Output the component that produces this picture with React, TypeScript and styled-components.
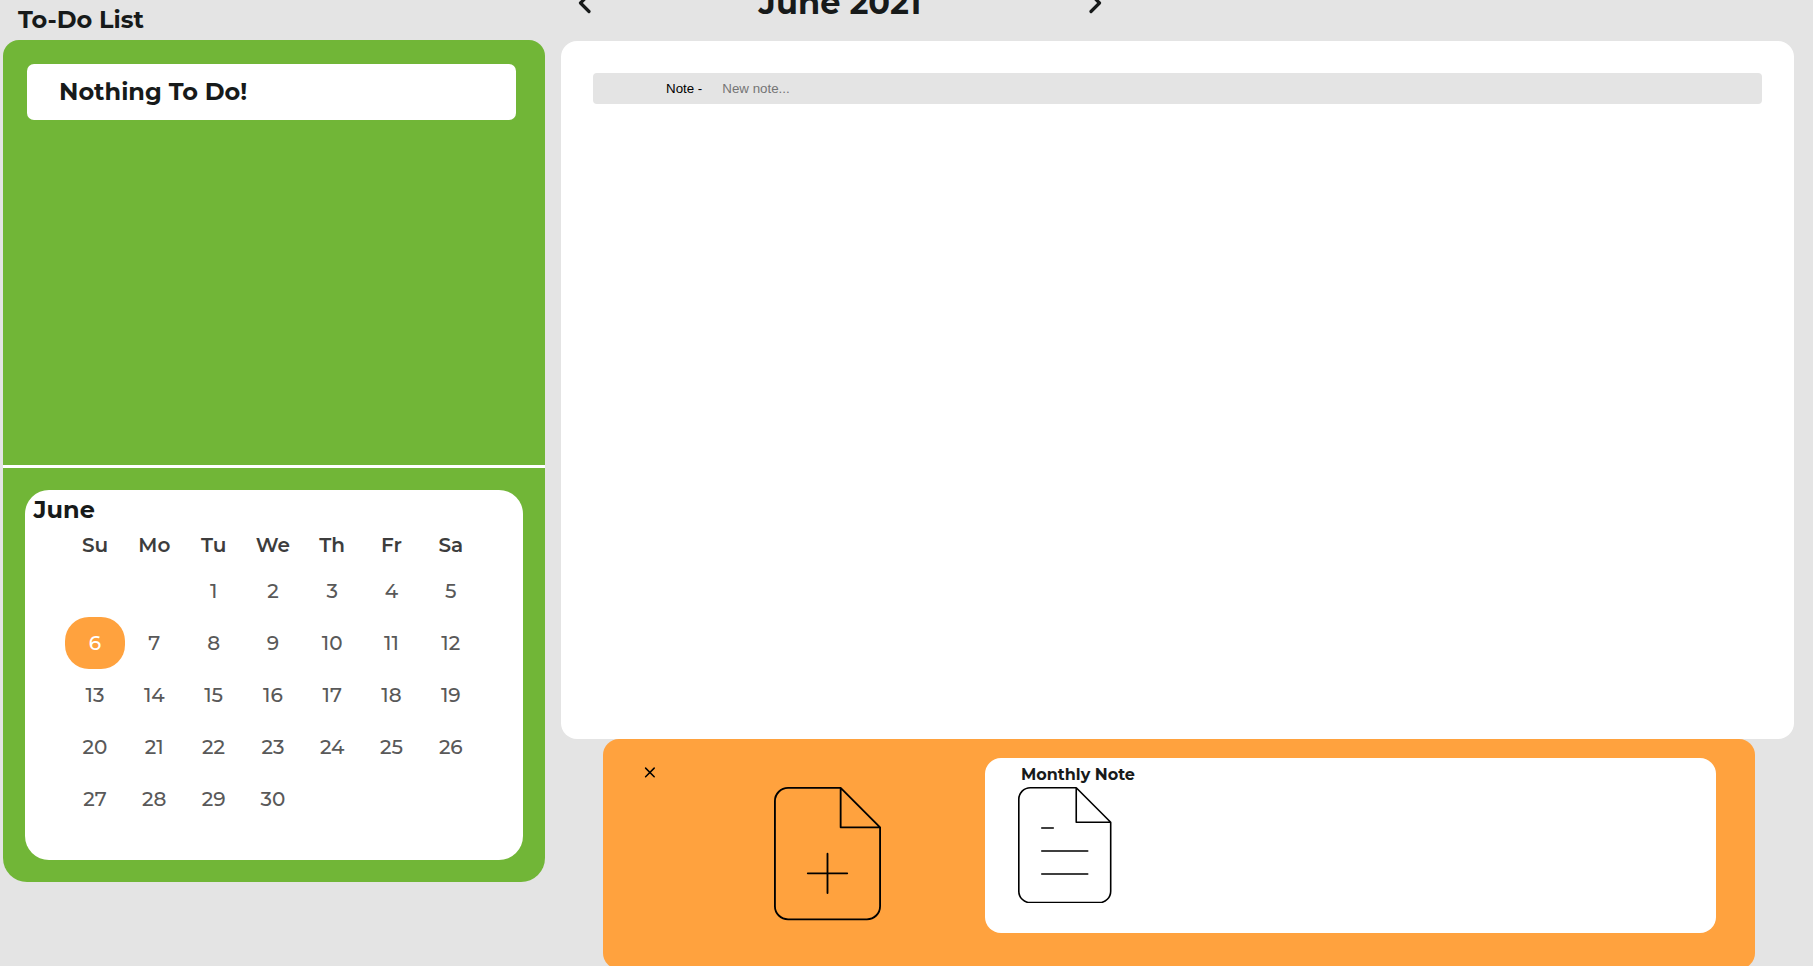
import React from "react";
import styled, { createGlobalStyle } from "styled-components";

const colors = {
  page: "#e4e4e4",
  green: "#71b637",
  orange: "#ffa23e",
  ink: "#171a1a",
};

const GlobalStyle = createGlobalStyle`
  * { box-sizing: border-box; }
  body {
    margin: 0;
    background: ${colors.page};
    font-family: Montserrat, Inter, sans-serif;
    color: ${colors.ink};
    overflow: hidden;
  }
`;

const Page = styled.div`
  display: flex;
  gap: 16px;
  height: 966px;
  padding-left: 3px;
  overflow: hidden;
`;

const Sidebar = styled.aside`
  width: 542px;
  flex: none;
`;

const Heading = styled.h2`
  margin: 0;
  font-size: 24px;
  font-weight: 700;
  white-space: nowrap;
`;

const SidebarHeader = styled.header`
  display: flex;
  align-items: center;
  height: 40px;
  padding: 0 0 2px 15px;
`;

const TodoPanel = styled.section`
  height: 425px;
  padding: 24px 29px 0 24px;
  background: ${colors.green};
  border-radius: 16px 16px 0 0;
`;

const TodoItem = styled.div`
  display: flex;
  align-items: center;
  height: 56px;
  padding: 0 0 1px 32px;
  background: #fff;
  border-radius: 7px;
`;

const CalendarPanel = styled.section`
  height: 417px;
  padding: 22px;
  background: ${colors.green};
  border-top: 3px solid #fff;
  border-radius: 0 0 24px 24px;
`;

const CalendarCard = styled.div`
  height: 370px;
  background: #fff;
  border-radius: 24px;
`;

const MonthName = styled.div`
  display: flex;
  align-items: center;
  height: 35px;
  padding: 4px 0 0 8.5px;
`;

const DayGrid = styled.div`
  display: grid;
  grid-template-columns: repeat(7, 59.3px);
  grid-template-rows: 40px;
  grid-auto-rows: 52px;
  padding-left: 40px;
`;

const Weekday = styled.div`
  display: flex;
  align-items: center;
  justify-content: center;
  width: 60px;
  font-size: 20px;
  font-weight: 600;
  color: #3d3d3d;
`;

const Day = styled.div<{ $selected?: boolean }>`
  display: flex;
  align-items: center;
  justify-content: center;
  width: 60px;
  font-size: 20px;
  font-weight: 500;
  color: ${(p) => (p.$selected ? "#fff" : "#595959")};
  background: ${(p) => (p.$selected ? colors.orange : "transparent")};
  border-radius: 24px;
`;

const Main = styled.main`
  width: 1233px;
  flex: none;
`;

const MonthHeader = styled.header`
  display: flex;
  align-items: center;
  justify-content: space-between;
  width: 542px;
  height: 77px;
  margin-top: -36px;
  padding: 0 1px 0 17px;
`;

const MonthTitle = styled.h1`
  margin: 0;
  font-size: 32px;
  font-weight: 700;
`;

const NotesBoard = styled.section`
  height: 698px;
  padding: 32px;
  background: #fff;
  border-radius: 16px;
`;

const NoteRow = styled.div`
  display: flex;
  align-items: center;
  gap: 20px;
  height: 31px;
  padding-left: 73px;
  background: ${colors.page};
  border-radius: 4px;
  font: 13.333px "Liberation Sans", Arial, sans-serif;
  color: #000;
`;

const NoteInput = styled.input`
  flex: 1;
  padding: 0;
  border: 0;
  background: transparent;
  font: inherit;
  &::placeholder {
    color: #757575;
  }
`;

const Drawer = styled.section`
  display: flex;
  height: 230px;
  margin: 0 39px 0 42px;
  padding-top: 19px;
  background: ${colors.orange};
  border-radius: 16px;
`;

const CloseButton = styled.button`
  width: 12px;
  height: 12px;
  margin: 9px 0 0 41px;
  padding: 0;
  border: 0;
  background: none;
  svg {
    display: block;
  }
`;

const AddButton = styled.button`
  height: 134px;
  margin: 29px 104px 0 118px;
  padding: 0;
  border: 0;
  background: none;
  svg {
    display: block;
  }
`;

const MonthlyCard = styled.div`
  width: 731px;
  height: 175px;
  padding-left: 33px;
  background: #fff;
  border-radius: 16px;
  svg {
    display: block;
  }
`;

const MonthlyLabel = styled.div`
  display: flex;
  align-items: center;
  height: 29px;
  padding: 4px 0 0 3px;
  font-size: 16px;
  font-weight: 700;
`;

const weekdays = ["Su", "Mo", "Tu", "We", "Th", "Fr", "Sa"];
const days = Array.from({ length: 30 }, (_, i) => i + 1);

const Chevron = ({ flip = false }: { flip?: boolean }) => (
  <svg width="13" height="22" viewBox="0 0 13 22" fill="none" stroke={colors.ink} strokeWidth="3.2" strokeLinecap="round" strokeLinejoin="round">
    <path d={flip ? "M2 2.5L10.5 11L2 19.5" : "M11 2.5L2.5 11L11 19.5"} />
  </svg>
);

const DocumentIcon = ({ width, children }: { width: number; children: React.ReactNode }) => (
  <svg width={width} height={(width * 10.14) / 8.14} viewBox="-0.07 -0.07 8.14 10.14" fill="none" stroke="#000" strokeWidth="0.14" strokeLinecap="round" strokeLinejoin="round">
    <path d="M5 0H1A1 1 0 0 0 0 1V9A1 1 0 0 0 1 10H7A1 1 0 0 0 8 9V3ZV3H8" />
    {children}
  </svg>
);

export default function App() {
  return (
    <>
      <GlobalStyle />
      <Page>
        <Sidebar>
          <SidebarHeader>
            <Heading>To-Do List</Heading>
          </SidebarHeader>
          <TodoPanel>
            <TodoItem>
              <Heading>Nothing To Do!</Heading>
            </TodoItem>
          </TodoPanel>
          <CalendarPanel>
            <CalendarCard>
              <MonthName>
                <Heading>June</Heading>
              </MonthName>
              <DayGrid>
                {weekdays.map((name) => (
                  <Weekday key={name}>{name}</Weekday>
                ))}
                <span />
                <span />
                {days.map((day) => (
                  <Day key={day} $selected={day === 6}>
                    {day}
                  </Day>
                ))}
              </DayGrid>
            </CalendarCard>
          </CalendarPanel>
        </Sidebar>
        <Main>
          <MonthHeader>
            <Chevron />
            <MonthTitle>June 2021</MonthTitle>
            <Chevron flip />
          </MonthHeader>
          <NotesBoard>
            <NoteRow>
              <span>Note -</span>
              <NoteInput placeholder="New note..." />
            </NoteRow>
          </NotesBoard>
          <Drawer>
            <CloseButton aria-label="Close">
              <svg width="12" height="12" viewBox="0 0 12 12" stroke="#000" strokeWidth="1.5" strokeLinecap="round">
                <path d="M1.6 1.1L10.2 9.7M10.2 1.1L1.6 9.7" />
              </svg>
            </CloseButton>
            <AddButton aria-label="Add note">
              <DocumentIcon width={107}>
                <path d="M4 5V8M2.5 6.5H5.5" />
              </DocumentIcon>
            </AddButton>
            <MonthlyCard>
              <MonthlyLabel>Monthly Note</MonthlyLabel>
              <DocumentIcon width={93.5}>
                <path d="M2 3.5H3M2 5.5H6M2 7.5H6" />
              </DocumentIcon>
            </MonthlyCard>
          </Drawer>
        </Main>
      </Page>
    </>
  );
}
